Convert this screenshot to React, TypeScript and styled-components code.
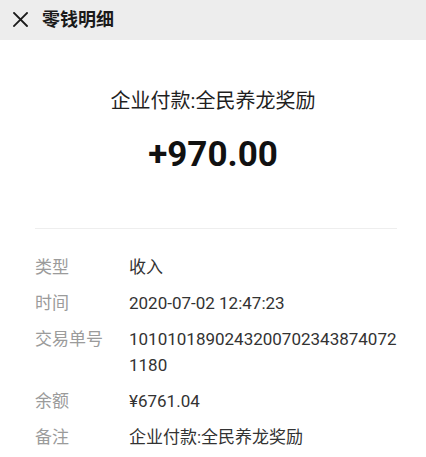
import React from "react";
import styled, { createGlobalStyle } from "styled-components";

const Global = createGlobalStyle`
  html, body { margin: 0; padding: 0; background: #ffffff; }
  body { font-family: Roboto, "Noto Sans CJK SC", "Noto Sans", sans-serif; -webkit-font-smoothing: antialiased; }
`;

const Page = styled.div`
  width: 426px;
  height: 457px;
  background: #ffffff;
  overflow: hidden;
`;

const Header = styled.header`
  height: 40px;
  background: #ededed;
  display: flex;
  align-items: center;
  padding-left: 13px;
  gap: 14px;
  box-sizing: border-box;
`;

const CloseIcon = styled.svg`
  width: 15px;
  height: 15px;
  flex: none;
  margin-top: -1px;
`;

const HeaderTitle = styled.h1`
  margin: 0;
  font-size: 18px;
  font-weight: 700;
  color: #1a1a1a;
  line-height: 1;
`;

const Summary = styled.section`
  display: flex;
  flex-direction: column;
  align-items: center;
  padding-top: 49px;
`;

const PayTitle = styled.div`
  font-size: 20px;
  color: #1f1f1f;
  line-height: 24px;
`;

const Amount = styled.div`
  margin-top: 22px;
  font-size: 35px;
  font-weight: 700;
  color: #111111;
  line-height: 40px;
`;

const Details = styled.section`
  margin: 53px 29px 0 35px;
  border-top: 1px solid #eeeeee;
  padding-top: 25px;
  display: flex;
  flex-direction: column;
  gap: 10px;
`;

const Row = styled.div`
  display: grid;
  grid-template-columns: 94px 1fr;
  align-items: start;
`;

const Label = styled.div`
  font-size: 17px;
  line-height: 26px;
  color: #9b9b9b;
`;

const Value = styled.div`
  font-size: 17px;
  line-height: 26px;
  color: #333333;
  word-break: break-all;
`;

const rows: [string, string][] = [
  ["类型", "收入"],
  ["时间", "2020-07-02 12:47:23"],
  ["交易单号", "10101018902432007023438740721180"],
  ["余额", "¥6761.04"],
  ["备注", "企业付款:全民养龙奖励"],
];

export default function App() {
  return (
    <Page>
      <Global />
      <Header>
        <CloseIcon viewBox="0 0 15 15">
          <path d="M1 1 L14 14 M14 1 L1 14" stroke="#1a1a1a" strokeWidth="1.8" strokeLinecap="square" fill="none" />
        </CloseIcon>
        <HeaderTitle>零钱明细</HeaderTitle>
      </Header>
      <Summary>
        <PayTitle>企业付款:全民养龙奖励</PayTitle>
        <Amount>+970.00</Amount>
      </Summary>
      <Details>
        {rows.map(([k, v]) => (
          <Row key={k}>
            <Label>{k}</Label>
            <Value>{v}</Value>
          </Row>
        ))}
      </Details>
    </Page>
  );
}
